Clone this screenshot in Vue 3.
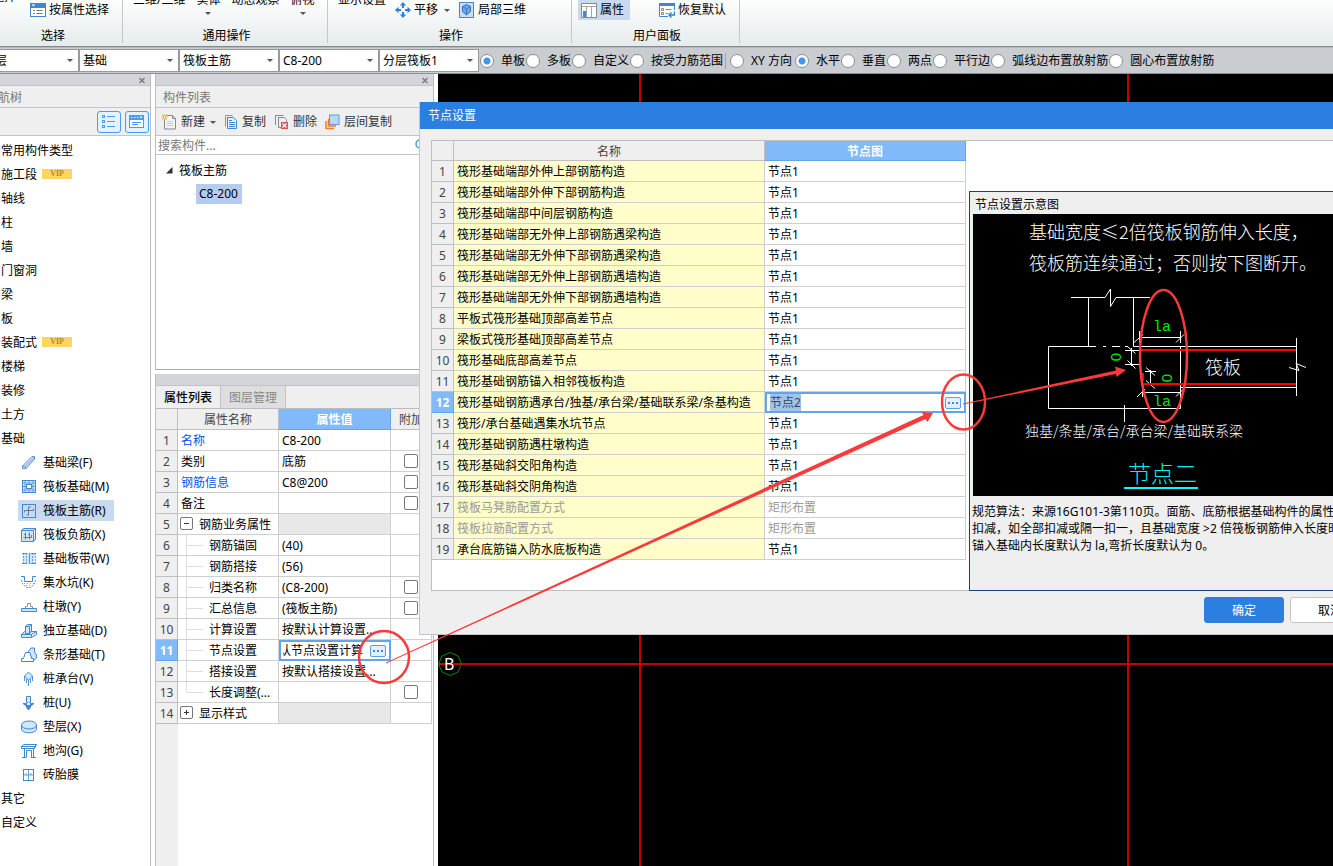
<script setup>
import { onMounted, ref } from 'vue'

const layers = [
  { name: 'floor', value: '首层' },
  { name: 'category', value: '基础' },
  { name: 'type', value: '筏板主筋' },
  { name: 'member', value: 'C8-200' },
  { name: 'layer', value: '分层筏板1' },
]

const rangeMode = ref('单板')
const rangeModes = ['单板', '多板', '自定义', '按受力筋范围']
const direction = ref('水平')
const directions = ['XY 方向', '水平', '垂直', '两点', '平行边', '弧线边布置放射筋', '圆心布置放射筋']

const navTop = [
  { label: '常用构件类型' },
  { label: '施工段', vip: true },
  { label: '轴线' },
  { label: '柱' },
  { label: '墙' },
  { label: '门窗洞' },
  { label: '梁' },
  { label: '板' },
  { label: '装配式', vip: true },
  { label: '楼梯' },
  { label: '装修' },
  { label: '土方' },
  { label: '基础' },
]
const navChildren = [
  { label: '基础梁(F)', icon: 'beam' },
  { label: '筏板基础(M)', icon: 'raft' },
  { label: '筏板主筋(R)', icon: 'main', active: true },
  { label: '筏板负筋(X)', icon: 'neg' },
  { label: '基础板带(W)', icon: 'strip' },
  { label: '集水坑(K)', icon: 'sump' },
  { label: '柱墩(Y)', icon: 'pier' },
  { label: '独立基础(D)', icon: 'pad' },
  { label: '条形基础(T)', icon: 'footing' },
  { label: '桩承台(V)', icon: 'cap' },
  { label: '桩(U)', icon: 'pile' },
  { label: '垫层(X)', icon: 'cushion' },
  { label: '地沟(G)', icon: 'trench' },
  { label: '砖胎膜', icon: 'brick' },
]
const navBottom = [{ label: '其它' }, { label: '自定义' }]

const props = [
  { name: '名称', value: 'C8-200', link: true },
  { name: '类别', value: '底筋', check: true },
  { name: '钢筋信息', value: 'C8@200', link: true, check: true },
  { name: '备注', value: '', check: true },
  { name: '钢筋业务属性', value: '', group: 'minus' },
  { name: '钢筋锚固', value: '(40)', child: true },
  { name: '钢筋搭接', value: '(56)', child: true },
  { name: '归类名称', value: '(C8-200)', child: true, check: true },
  { name: '汇总信息', value: '(筏板主筋)', child: true, check: true },
  { name: '计算设置', value: '按默认计算设置...', child: true },
  { name: '节点设置', value: '按默认节点设置计算', child: true, editing: true },
  { name: '搭接设置', value: '按默认搭接设置...', child: true },
  { name: '长度调整(...', value: '', child: true, last: true, check: true },
  { name: '显示样式', value: '', group: 'plus' },
]

const nodes = [
  ['筏形基础端部外伸上部钢筋构造', '节点1'],
  ['筏形基础端部外伸下部钢筋构造', '节点1'],
  ['筏形基础端部中间层钢筋构造', '节点1'],
  ['筏形基础端部无外伸上部钢筋遇梁构造', '节点1'],
  ['筏形基础端部无外伸下部钢筋遇梁构造', '节点1'],
  ['筏形基础端部无外伸上部钢筋遇墙构造', '节点1'],
  ['筏形基础端部无外伸下部钢筋遇墙构造', '节点1'],
  ['平板式筏形基础顶部高差节点', '节点1'],
  ['梁板式筏形基础顶部高差节点', '节点1'],
  ['筏形基础底部高差节点', '节点1'],
  ['筏形基础钢筋锚入相邻筏板构造', '节点1'],
  ['筏形基础钢筋遇承台/独基/承台梁/基础联系梁/条基构造', '节点2'],
  ['筏形/承台基础遇集水坑节点', '节点1'],
  ['筏形基础钢筋遇柱墩构造', '节点1'],
  ['筏形基础斜交阳角构造', '节点1'],
  ['筏形基础斜交阴角构造', '节点1'],
  ['筏板马凳筋配置方式', '矩形布置'],
  ['筏板拉筋配置方式', '矩形布置'],
  ['承台底筋锚入防水底板构造', '节点1'],
]
const isEditing = (i) => i === 11
const isDisabled = (i) => i === 16 || i === 17

const nodeInput = ref(null)
onMounted(() => {
  const el = Array.isArray(nodeInput.value) ? nodeInput.value[0] : nodeInput.value
  if (el) {
    el.focus({ preventScroll: true })
    el.select()
  }
})
</script>

<template>
  <div class="app">
    <header class="ribbon">
      <section class="group g-select">
        <div class="tools">
          <button class="tall clipped"><span>选择</span></button>
          <button class="tool">
            <svg width="16" height="16" viewBox="0 0 16 16"><rect x=".5" y="1.500" width="15" height="13" fill="#fff" stroke="#3f86d6"/><rect x="0" y="1" width="16" height="5" fill="#3f86d6"/><path d="M1.500 2.500h4L3.500 4.500z" fill="#fff"/><path d="M3 8.500h2M6.500 8.500h6M3 11.500h2M6.500 11.500h6" stroke="#777"/></svg>
            <span>按属性选择</span>
          </button>
        </div>
        <h2>选择</h2>
      </section>
      <section class="group g-common">
        <div class="tools">
          <button class="tall"><span>三维/二维</span><i></i></button>
          <button class="tall"><span>实体</span><i class="caret"></i></button>
          <button class="tall"><span>动态观察</span><i></i></button>
          <button class="tall"><span>俯视</span><i class="caret"></i></button>
        </div>
        <h2>通用操作</h2>
      </section>
      <section class="group g-operate">
        <div class="tools">
          <button class="tall"><span>显示设置</span><i></i></button>
          <button class="tool">
            <svg width="16" height="16" viewBox="0 0 16 16"><g fill="#2f7fd8"><path d="M8 0l3.200 3.500H4.800zM8 16l3.200-3.500H4.800zM0 8l3.500-3.200v6.400zM16 8l-3.500-3.200v6.400z"/><path d="M7 3h2v3H7zM7 10h2v3H7zM3 7h3v2H3zM10 7h3v2h-3z"/></g></svg>
            <span>平移</span><i class="caret"></i>
          </button>
          <button class="tool">
            <svg width="16" height="16" viewBox="0 0 16 16"><rect x=".5" y=".5" width="14" height="15" fill="#c6def8" stroke="#4a86c8"/><path d="M7.500 2.500l4 2v5l-4 3.500-4-3.500v-5z" fill="#6aa7ec" stroke="#2c72c4"/><path d="M4 4.800l3.500 2.200L11 4.800M7.500 7v5.500" fill="none" stroke="#2c72c4" stroke-width=".8"/></svg>
            <span>局部三维</span>
          </button>
        </div>
        <h2>操作</h2>
      </section>
      <section class="group g-panel">
        <div class="tools">
          <button class="tool pressed">
            <svg width="16" height="16" viewBox="0 0 16 16"><rect x=".5" y="1.500" width="15" height="14" fill="#fff" stroke="#8b8b8b"/><path d="M1 4.500h14M5.500 4v11M10.500 4v11" stroke="#a5a5a5"/><rect x="2" y="9" width="3" height="6" fill="#3f86d6"/></svg>
            <span>属性</span>
          </button>
          <button class="tool">
            <svg width="16" height="16" viewBox="0 0 16 16"><path d="M15.500 8V1.500H.5v13H9" fill="#fff" stroke="#3f86d6"/><path d="M0 2.500h16" stroke="#3f86d6" stroke-width="3"/><path d="M2.500 6.500h2v2h-2zM2.500 10.500h2v2h-2zM6.500 7.500h6M6.500 11.500h3" fill="none" stroke="#888"/><path d="M10 13h5.500V9.500M12.500 10.500L10 13l2.500 2.500" fill="none" stroke="#2f7fd8" stroke-width="1.400"/></svg>
            <span>恢复默认</span>
          </button>
        </div>
        <h2>用户面板</h2>
      </section>
    </header>

    <div class="options">
      <span v-for="l in layers" :key="l.name" class="pick" :class="l.name">
        <select :aria-label="l.name"><option>{{ l.value }}</option></select>
        <i class="caret"></i>
      </span>
      <div class="radios">
        <label v-for="m in rangeModes" :key="m"><input v-model="rangeMode" type="radio" name="range" :value="m" />{{ m }}</label>
      </div>
      <div class="radios second">
        <label v-for="m in directions" :key="m"><input v-model="direction" type="radio" name="direction" :value="m" />{{ m }}</label>
      </div>
    </div>

    <main class="work">
      <aside class="panel nav">
        <div class="strip"><button class="close" aria-label="关闭"><svg width="8" height="8" viewBox="0 0 8 8"><path d="M1.500 2l5 5M6.500 2l-5 5" stroke="#777" stroke-width="1.300"/></svg></button></div>
        <h3 class="nav-title">导航树</h3>
        <div class="nav-tools">
          <button aria-label="列表"><svg width="16" height="16" viewBox="0 0 16 16"><g fill="none" stroke="#4a9cf0"><rect x="1.500" y="1.500" width="2" height="2"/><rect x="1.500" y="6.500" width="2" height="2"/><rect x="1.500" y="11.500" width="2" height="2"/><path d="M6 2.500h8M6 7.500h8M6 12.500h8"/></g></svg></button>
          <button aria-label="窗口"><svg width="16" height="16" viewBox="0 0 16 16"><rect x=".5" y="1.500" width="14" height="12" fill="#fff" stroke="#4a9cf0"/><rect x="0" y="1" width="15" height="5" fill="#4a9cf0"/><path d="M2 3.500h1.500M5 3.500h1.500M8 3.500h1.500" stroke="#fff"/><path d="M10.500 2.500h3L12 4.500z" fill="#fff"/><path d="M3 8.500h9M3 10.500h6" stroke="#4a9cf0"/></svg></button>
        </div>
        <ul class="tree">
          <li v-for="n in navTop" :key="n.label"><button>{{ n.label }}</button><b v-if="n.vip" class="vip">VIP</b></li>
          <li v-for="n in navChildren" :key="n.label" class="sub">
            <button :class="{ active: n.active }">
              <svg width="16" height="16" viewBox="0 0 16 16" fill="#d3e5f8" stroke="#4288cf">
                <template v-if="n.icon === 'beam'"><path d="M1.500 11L11 1.500h2.500V4L5 13.500H1.500z" stroke-width=".9"/><path d="M1.500 11l2.500.5 1 2M4 11.500L13.500 2" fill="none" stroke-width=".8"/></template>
                <template v-else-if="n.icon === 'raft'"><rect x="1.500" y="1.500" width="13" height="12"/><rect x="5.500" y="5.500" width="5" height="4" fill="#fff"/><path d="M4 1v13M12 1v13M1 4h14M1 11h14M1 7.500h4M11 7.500h4M8 1v4M8 10v4" fill="none" stroke-width=".7"/></template>
                <template v-else-if="n.icon === 'main'"><rect x="1.500" y="1.500" width="13" height="13" fill="#c3dbf5"/><path d="M7.500 4v8M3.500 7.500h9M7.500 4h2.500M7.500 12H5.500M3.500 7.500v2M12.500 7.500v-2" fill="none" stroke="#617c98"/></template>
                <template v-else-if="n.icon === 'neg'"><path d="M.5 3.500h12v11H.5zM.5 3.500l2-2h12l-2 2M12.500 14.500l2-2v-11"/><path d="M4.500 5.500v7M8.500 5.500v7M2.500 10.500h8M3 7.500h1.500M7 7.500h1.500M10.500 8v2.500" fill="none"/></template>
                <template v-else-if="n.icon === 'strip'"><path d="M2 2h12v11H2z" stroke="none"/><path d="M1 2.500h5M10 2.500h5M1 12.500h5M10 12.500h5M8.500 2v11" stroke-width=".9"/><path d="M5.500 2v11M11.500 2v11M2.500 2v11M14.500 2v11" stroke-dasharray="2 1" stroke-width=".7"/></template>
                <template v-else-if="n.icon === 'sump'"><path d="M0 1.500h3.500v5h8v-5H15" fill="none"/><path d="M.5 5l1 4 4 3.500h4l4-3.500 1-4" fill="none" stroke-dasharray="2 1" stroke-width=".9"/><path d="M3 8.500h1M6 8.500h1M9 8.500h1M12 8.500h1M5 10.500h1M8 10.500h1" stroke="#a99d6a"/></template>
                <template v-else-if="n.icon === 'pier'"><path d="M.5 9.500h15v3H.5z"/><path d="M4.500 9V7.500h2v-3h3v3h2V9" stroke="#8b959e" fill="#fff"/></template>
                <template v-else-if="n.icon === 'pad'"><path d="M.5 11.500h10v3H.500zM.5 11.500l3-3h12l-5 3M15.500 8.500v3l-5 3"/><path d="M4.500 10.500v-7l2-2h4v6.500l-2 2.500zM4.500 3.500h4v7M8.500 3.500l2-2"/></template>
                <template v-else-if="n.icon === 'footing'"><path d="M7 5l3-4h3.500v4L15.500 8v3l-3 2.500z"/><path d="M.5 14.500v-3h2l2-6h4.500l1.500 6h2v3z" fill="#fff"/></template>
                <template v-else-if="n.icon === 'cap'"><path d="M7.500 1l4 4-4 4.500-4-4.500zM7.500 9v6M5.500 8v4M9.500 8v4M3.500 5v5M11.500 5v5" stroke-width=".9"/></template>
                <template v-else-if="n.icon === 'pile'"><path d="M5.500 1.500h4v6h-4z"/><path d="M2 8.500h3.500v4l2 2.500 2-2.500v-4H13l-2.500 2h-6z" fill="#4288cf"/><path d="M7.500 6v4" stroke="#d3e5f8"/></template>
                <template v-else-if="n.icon === 'cushion'"><path d="M.5 6v4c0 5 15 5 15 0V6"/><ellipse cx="8" cy="6" rx="7.500" ry="4"/></template>
                <template v-else-if="n.icon === 'trench'"><path d="M.5 3.500l2-2h13l-2 2zM.5 3.500v2h13v-2M13.500 5.500l2-4M1 14.500h4M10 14.500h5M3.500 5.500v9M12.500 5.500v9M5.500 7.500h5v7M5.500 7.500v7" fill="none"/></template>
                <template v-else><rect x="2.500" y="2.500" width="10" height="11" fill="#fff"/><path d="M7.500 2v12M2 8h11M5 6v2M10 6v2" stroke-width=".8"/></template>
              </svg>
              <span>{{ n.label }}</span>
            </button>
          </li>
          <li v-for="n in navBottom" :key="n.label"><button>{{ n.label }}</button></li>
        </ul>
      </aside>

      <div class="middle">
        <section class="panel members">
          <div class="strip"><button class="close" aria-label="关闭"><svg width="8" height="8" viewBox="0 0 8 8"><path d="M1.500 2l5 5M6.500 2l-5 5" stroke="#777" stroke-width="1.300"/></svg></button></div>
          <h3>构件列表</h3>
          <div class="member-tools">
            <button class="new"><svg width="16" height="16" viewBox="0 0 16 16"><path d="M2.500 5v10h11V4.500l-3-3H5" fill="#f2f2f2" stroke="#7f8b96"/><path d="M10.500 1.500v3h3" fill="none" stroke="#7f8b96"/><path d="M5 7.500h6M5 9.500h6M5 11.500h6" fill="none" stroke="#c8cdd2"/><path d="M0 1h1M2 1h1M4 1h1M1 2h1M3 2h1M0 3h2M3 3h2M1 4h1M3 4h1M0 5h1M2 5h1M4 5h1" stroke="#f29a1e"/></svg>新建<i class="caret"></i></button>
            <button class="copy"><svg width="14" height="16" viewBox="0 0 14 16"><path d="M1.500 12.500v-11h7" fill="none" stroke="#7f9ab5"/><path d="M3.500 3.500h6l3 3v8h-9z" fill="#e3effc" stroke="#3f86d6"/><path d="M5 6.500h3M5 8.500h6M5 10.500h6M5 12.500h6" stroke="#3f86d6"/></svg>复制</button>
            <button class="remove"><svg width="15" height="16" viewBox="0 0 15 16"><path d="M1.500 11V1.500h8M7 13.500H4.500v-10h6l2 2V8" fill="none" stroke="#7f8b96"/><rect x="7" y="8" width="7" height="7" fill="#d9534f"/><path d="M8.500 9.500l4 4M12.500 9.500l-4 4" stroke="#fff" stroke-width="1.200"/></svg>删除</button>
            <button class="across"><svg width="15" height="16" viewBox="0 0 15 16"><path d="M1 7v7.500h8M3.500 5v7H11" fill="none" stroke="#ee7f22" stroke-width="1.500"/><rect x="4.500" y="1" width="9.500" height="9.500" fill="#b9d7fb" stroke="#5a9be6"/></svg>层间复制</button>
          </div>
          <div class="search"><input type="text" placeholder="搜索构件..." aria-label="搜索构件" /><svg width="12" height="12" viewBox="0 0 12 12"><circle cx="5" cy="5" r="4" fill="none" stroke="#3f9ed6" stroke-width="1.500"/><path d="M8 8l3 3" stroke="#3f9ed6" stroke-width="1.500"/></svg></div>
          <div class="member-tree">
            <p><svg width="7" height="7" viewBox="0 0 7 7"><path d="M6.500 0v6.500H0z" fill="#333"/></svg>筏板主筋</p>
            <button>C8-200</button>
          </div>
        </section>

        <section class="panel properties">
          <div class="strip"></div>
          <div class="tabs" role="tablist"><button role="tab" aria-selected="true" class="on">属性列表</button><button role="tab" aria-selected="false">图层管理</button></div>
          <table class="grid prop-grid">
            <colgroup><col class="c-no" /><col class="c-pname" /><col class="c-pval" /><col /></colgroup>
            <thead><tr><th></th><th>属性名称</th><th class="hot">属性值</th><th class="cut">附加</th></tr></thead>
            <tbody>
              <tr v-for="(p, i) in props" :key="p.name">
                <th :class="{ hot: p.editing }">{{ i + 1 }}</th>
                <td :class="{ link: p.link, child: p.child, last: p.last, fold: p.group }">
                  <button v-if="p.group" class="toggle" :aria-label="p.name"><svg width="7" height="7" viewBox="0 0 7 7"><path :d="p.group === 'plus' ? 'M1 3.500h5M3.500 1v5' : 'M1 3.500h5'" stroke="#333"/></svg></button>{{ p.name }}
                </td>
                <td v-if="p.editing" class="edit"><div class="editor"><input class="scrolled" type="text" :value="p.value" :aria-label="p.name" /><button class="more" aria-label="更多"><i></i><i></i><i></i></button></div></td>
                <td v-else :class="{ blank: p.group }">{{ p.value }}</td>
                <td class="mark"><input v-if="p.check" type="checkbox" :aria-label="'附加 ' + p.name" /></td>
              </tr>
            </tbody>
          </table>
          <div class="gutter"></div>
        </section>
      </div>

      <section class="canvas">
        <svg class="axes" width="100%" height="100%">
          <g stroke="#c40000" stroke-width="2"><path d="M202 0V2000M690 0V2000M0 590H4000"/></g>
          <path d="M12 578.500l8 3.500 3.500 8-3.500 8-8 3.500-8-3.500L.5 590 4 582z" fill="none" stroke="#0a8a0a"/>
          <text x="6" y="596" fill="#fff" font-size="16">B</text>
        </svg>
      </section>
    </main>

    <section class="dialog" role="dialog" aria-label="节点设置">
      <h1>节点设置</h1>
      <div class="sheet">
        <table class="grid node-grid">
          <colgroup><col class="c-no" /><col class="c-name" /><col class="c-val" /></colgroup>
          <thead><tr><th></th><th>名称</th><th class="hot">节点图</th></tr></thead>
          <tbody>
            <tr v-for="(n, i) in nodes" :key="n[0]" :class="{ off: isDisabled(i) }">
              <th :class="{ hot: isEditing(i) }">{{ i + 1 }}</th>
              <td class="name">{{ n[0] }}</td>
              <td v-if="isEditing(i)" class="edit"><div class="editor"><input ref="nodeInput" class="picked" type="text" :value="n[1]" aria-label="节点图" /><button class="more" aria-label="更多"><i></i><i></i><i></i></button></div></td>
              <td v-else>{{ n[1] }}</td>
            </tr>
          </tbody>
        </table>
        <section class="preview">
          <h2>节点设置示意图</h2>
          <div class="drawing">
            <svg width="480" height="282" viewBox="973 214 480 282">
              <g class="cad" fill="#fff">
                <text x="1029" y="239" font-size="18">基础宽度≤2倍筏板钢筋伸入长度，</text>
                <text x="1029" y="270" font-size="18">筏板筋连续通过；否则按下图断开。</text>
                <text x="1205" y="374" font-size="18">筏板</text>
                <text x="1025" y="436" font-size="14">独基/条基/承台/承台梁/基础联系梁</text>
                <text x="1128" y="482" font-size="23" fill="#00f0f0">节点二</text>
              </g>
              <path d="M1124 488h74" stroke="#00ffff" stroke-width="2"/>
              <g fill="none" stroke="#fff">
                <path d="M1071 297.500h34l5.500-8.500v17.500l5.500-9h34"/>
                <path d="M1088.500 297v49M1133.500 297v49.500H1296M1096 346.500h-47.500v62h132v-62M1180.500 387.500H1296M1296.500 338v58"/>
                <path d="M1103 346.500h3M1112 346.500h8M1125 346.500h3"/>
                <path d="M1289 367.500l10 3-3-7 10 4"/>
                <path d="M1139 337.500h42M1139.500 331v12M1180.500 331v12M1134 342.500l9-8M1176 342.500l8-8"/>
                <path d="M1131.500 348v18M1125 350.500h14M1125 364.500h14M1127.500 346.500l8 7M1127.500 360.500l8 8"/>
                <path d="M1150.500 370v15M1145 371.500h11M1144 384.500h12M1146 367.500l9 8M1146 380.500l9 8"/>
                <path d="M1142 392.500h39M1142.500 387v10M1137 397l8-8M1176 396.500l8-8M1124.500 405v17"/>
              </g>
              <path d="M1140 364v-14H1296M1143 384H1296M1143 373v8" fill="none" stroke="#f00" stroke-width="2"/>
              <g fill="#00e800" class="dim">
                <text x="1153" y="331" font-size="15">la</text>
                <text x="1153" y="406" font-size="15">la</text>
                <text class="turned" x="1115" y="357">0</text>
                <text class="turned" x="1166" y="378">0</text>
              </g>
            </svg>
          </div>
          <p>规范算法：来源16G101-3第110页。面筋、底筋根据基础构件的属性<br />扣减，如全部扣减或隔一扣一，且基础宽度 &gt;2 倍筏板钢筋伸入长度时<br />锚入基础内长度默认为 la,弯折长度默认为 0。</p>
        </section>
      </div>
      <footer><button class="ok">确定</button><button>取消</button></footer>
    </section>

    <svg class="marks" width="100%" height="100%">
      <g fill="none" stroke="#f93a3a" stroke-width="2.500">
        <ellipse cx="384" cy="657" rx="25" ry="26"/>
        <ellipse cx="963.500" cy="402" rx="21.500" ry="27.500"/>
        <ellipse cx="1163.500" cy="356" rx="23.500" ry="66"/>
      </g>
      <g fill="#f93a3a">
        <path d="M386 662.500L923.500 415l-2-3 11.500 1-5.500 9-2-3L386 663.500z"/>
        <path d="M963 403.500l153-33-1-4 11 3.500-9.500 7-.5-3L963 404.500z"/>
      </g>
    </svg>
  </div>
</template>

<style>
html, body { background: #fff; }
</style>

<style scoped>
* { box-sizing: border-box; }
.app {
  position: relative; display: flex; flex-direction: column; height: 100vh; overflow: hidden;
  font: 12px/16px "Noto Sans", "Noto Sans CJK SC", sans-serif; color: #000; background: #fff; white-space: nowrap;
}
button { font: inherit; color: inherit; background: none; border: 0; padding: 0; margin: 0; }
input, select { font: inherit; color: inherit; margin: 0; }
h1, h2, h3, p, ul { margin: 0; padding: 0; font-size: 12px; font-weight: 400; }
ul { list-style: none; }
svg { display: block; flex: none; }
.caret { flex: none; width: 0; height: 0; border: 3px solid transparent; border-top: 3px solid #555; border-bottom: 0; }

/* ribbon */
.ribbon { flex: none; display: flex; height: 47px; overflow: hidden; border-bottom: 1px solid #85898e; background: linear-gradient(#fdfefe, #e6ebeb); }
.group { flex: none; display: flex; flex-direction: column; justify-content: flex-end; border-right: 1px solid #c5c8ca; margin-bottom: 3px; }
.group h2 { height: 15px; padding-left: 3px; text-align: center; }
.tools { display: flex; align-items: flex-end; height: 31px; padding-bottom: 8px; }
.tool { display: flex; align-items: center; gap: 3px; height: 20px; }
.tool .caret { margin-left: 3px; }
.tall { display: flex; flex-direction: column; align-items: center; height: 28px; }
.tall i { margin-top: 4px; }
.g-select { width: 123px; }
.g-select .tools { gap: 14px; }
.g-select h2 { padding: 0 16px 0 0; }
.tall.clipped { width: 16px; align-items: flex-end; height: 31px; }
.g-common { width: 205px; }
.g-common .tools { gap: 11px; padding-left: 10px; }
.g-operate { width: 244px; }
.g-operate .tools { gap: 9px; padding-left: 10px; }
.g-panel { width: 168px; }
.g-panel .tools { gap: 29px; padding-left: 6px; }
.pressed { background: #c8d9f0; padding: 0 6px 0 3px; }

/* option bar */
.options { flex: none; display: flex; align-items: center; height: 27px; border-top: 1px solid #b4b7bb; border-bottom: 1px solid #8b8e93; background: #c9ccd1; }
.pick { position: relative; flex: none; width: 100px; height: 23px; }
.pick.floor { margin-left: -21px; }
.pick select { appearance: none; width: 100%; height: 100%; padding: 0 0 0 3px; border: 1px solid #96999e; border-radius: 0; background: #fff; }
.pick .caret { position: absolute; right: 6px; top: 10px; }
.radios { display: flex; gap: 1px; padding-left: 1px; }
.radios.second { border-left: 1px solid #9fa2a7; margin-left: 2px; padding-left: 4px; }
.radios label { display: flex; align-items: center; gap: 7px; }
.radios.second label:first-child { min-width: 64px; }
.radios input { appearance: none; width: 14px; height: 14px; border: 1px solid #8e8e8e; border-radius: 50%; background: #fff; }
.radios input:checked { background: radial-gradient(circle, #3f97f5 0 3px, #fff 4px); }

/* panels */
.work { flex: 1; display: flex; min-height: 0; }
.panel { display: flex; flex-direction: column; background: #fff; border-right: 1px solid #b9bcc2; }
.strip { flex: none; display: flex; justify-content: flex-end; align-items: center; height: 12px; padding-right: 4px; background: #d3d5da; border-bottom: 1px solid #c0c2c6; }
.close { width: 8px; height: 8px; }
.panel h3 { flex: none; height: 22px; line-height: 23px; padding-left: 7px; color: #777; background: #efefef; border-bottom: 1px solid #c4c4c4; }
.nav { flex: none; width: 151px; }
.panel .nav-title { padding: 0; text-indent: -14px; overflow: hidden; }
.nav-tools { flex: none; display: flex; justify-content: flex-end; gap: 4px; height: 28px; padding: 3px 1px 0 0; background: #efefef; border-bottom: 1px solid #c4c4c4; }
.nav-tools button { display: flex; align-items: center; justify-content: center; width: 24px; height: 22px; border: 1px solid #4a9cf0; border-radius: 3px; background: #e4f1fe; }
.tree { padding-top: 2px; }
.tree li { display: flex; align-items: center; gap: 5px; height: 24px; padding-left: 1px; }
.tree button { padding-top: 2px; }
.tree .sub { padding-left: 18px; }
.sub button { display: flex; align-items: center; gap: 6px; height: 21px; padding: 2px 8px 0 3px; }
.sub .active { background: #c8d9f0; }
.vip { width: 30px; height: 10px; text-align: center; font: bold 8px/10px "Liberation Serif", serif; color: #b08a22; background: #ffd55f; }

.middle { flex: none; display: flex; flex-direction: column; gap: 4px; width: 279px; margin-left: 4px; }
.middle .panel { border-left: 1px solid #b9bcc2; }
.members { flex: none; height: 296px; border-bottom: 1px solid #a9acb0; }
.member-tools { flex: none; display: flex; align-items: center; gap: 8px; height: 28px; padding: 1px 0 0 6px; background: #efefef; border-bottom: 1px solid #c4c4c4; color: #333; }
.member-tools button { display: flex; align-items: center; gap: 4px; }
.member-tools .new { gap: 3px; }
.member-tools .caret { margin-left: 2px; }
.search { flex: none; display: flex; align-items: center; height: 19px; border-bottom: 1px solid #c4c4c4; }
.search input { flex: 1; min-width: 0; height: 18px; padding: 0 2px; border: 0; outline: 0; background: none; }
.search input::placeholder { color: #777; opacity: 1; }
.search svg { margin-right: 6px; }
.member-tree { padding: 6px 0 0 10px; }
.member-tree p { display: flex; align-items: center; gap: 6px; height: 19px; }
.member-tree button { height: 20px; margin: 4px 0 0 30px; padding: 0 4px 0 3px; background: #b4ccf0; }

.properties { flex: 1; min-height: 0; }
.tabs { flex: none; display: flex; height: 23px; background: #efefef; border-bottom: 1px solid #b9bcc2; }
.tabs button { width: 65px; padding-top: 1px; color: #888; background: #dedede; border-right: 1px solid #c4c4c4; }
.tabs .on { color: #000; font-weight: 500; background: #efefef; }
.gutter { flex: 1; width: 22px; background: #efefef; }

/* grids */
.grid { flex: none; border-collapse: separate; border-spacing: 0; table-layout: fixed; }
.grid th, .grid td { height: 21px; padding: 2px 0 0 3px; line-height: 18px; text-align: left; font-weight: 400; overflow: hidden; border-right: 1px solid #cfcfcf; border-bottom: 1px solid #cfcfcf; }
.grid th { padding: 2px 0 0; text-align: center; color: #444; background: #efefef; border-color: #bfbfbf; }
.grid .hot { color: #fff; font-weight: 700; background: #80bafb; border-color: #62a5ea; }
.grid td { background: #fff; }
.c-no { width: 22px; }
.c-pname { width: 101px; }
.c-pval { width: 112px; }
.prop-grid { width: 276px; }
.grid .cut { text-align: left; padding-left: 8px; }
.grid .link { color: #0a50f0; }
.grid .blank { background: #e8e8e8; }
.grid .fold { padding-left: 21px; position: relative; }
.toggle { position: absolute; left: 2px; top: 3px; display: flex; align-items: center; justify-content: center; width: 13px; height: 13px; border: 1px solid #777; border-radius: 2px; background: #fff; }
.grid .child { padding-left: 31px; position: relative; }
.child::before { content: ""; position: absolute; left: 8px; top: 0; width: 16px; height: 10px; border-left: 1px solid #dedede; border-bottom: 1px solid #dedede; }
.child:not(.last)::after { content: ""; position: absolute; left: 8px; top: 10px; height: 11px; border-left: 1px solid #dedede; }
.grid .mark { padding: 0; }
.mark input { appearance: none; display: block; width: 14px; height: 14px; margin: 0 auto; border: 1px solid #777; border-radius: 2px; background: #fff; }
.grid .edit { padding: 0; border-color: #64a4e8; }
.editor { display: flex; align-items: center; height: 20px; border: 2px solid #64a4e8; border-width: 2px 1px 1px 2px; padding: 0 3px 0 2px; background: #fff; }
.editor input { flex: 1; min-width: 0; height: 17px; line-height: 17px; padding: 0; border: 0; outline: 0; background: none; }
.editor .scrolled { text-indent: -28px; margin-right: 6px; }
.editor .picked { padding-left: 1px; color: #34465e; }
.picked::selection { color: #34465e; background: #a3c2ea; }
.more { flex: none; display: flex; align-items: center; justify-content: center; gap: 2px; width: 16px; height: 12px; border: 1px solid #5a9fdf; border-radius: 2px; background: #e2effc; }
.more i { width: 2px; height: 2px; background: #4089cf; }

/* drawing area */
.canvas { flex: 1; min-width: 0; margin-left: 4px; background: #000; overflow: hidden; }

/* dialog */
.dialog { position: absolute; left: 419px; right: -49px; top: 102px; display: flex; flex-direction: column; background: #efefef; border-left: 1px solid #c3c6cc; border-bottom: 1px solid #c3c6cc; }
.dialog h1 { height: 27px; line-height: 27px; padding-left: 8px; color: #fff; background: #2b7fe1; }
.sheet { display: flex; align-items: stretch; height: 451px; margin: 11px 11px 0; border: 1px solid #bfbfbf; background: #fff; }
.node-grid { width: 534px; align-self: flex-start; }
.c-name { width: 311px; }
.c-val { width: 201px; }
.node-grid thead th { height: 20px; line-height: 17px; }
.node-grid .name { background: #fffdca; }
.node-grid .off td { color: #999; }
.preview { flex: 1; min-width: 0; margin: 50px 0 -1px 3px; background: #efefef; border: 1px solid #1f4078; overflow: hidden; }
.preview h2 { height: 22px; line-height: 25px; padding-left: 5px; }
.drawing { margin-left: 3px; background: #000; overflow: hidden; }
.preview p { padding: 7px 0 0 2px; line-height: 17px; }
.cad { font-family: "Noto Sans CJK SC", sans-serif; font-weight: 300; }
.dim { font-family: "Liberation Mono", monospace; }
.turned { font: 15px "Liberation Sans", sans-serif; text-anchor: middle; dominant-baseline: central; transform-box: fill-box; transform-origin: center; transform: rotate(-90deg); }
.dialog footer { display: flex; justify-content: flex-end; gap: 6px; padding: 6px 12px 11px 0; }
.dialog footer button { width: 80px; height: 26px; padding-top: 2px; border: 1px solid #c4c4c4; border-radius: 3px; background: #fff; }
.dialog footer .ok { color: #fff; background: #2b7fe1; border-color: #2b7fe1; }

.marks { position: absolute; inset: 0; pointer-events: none; }
</style>
